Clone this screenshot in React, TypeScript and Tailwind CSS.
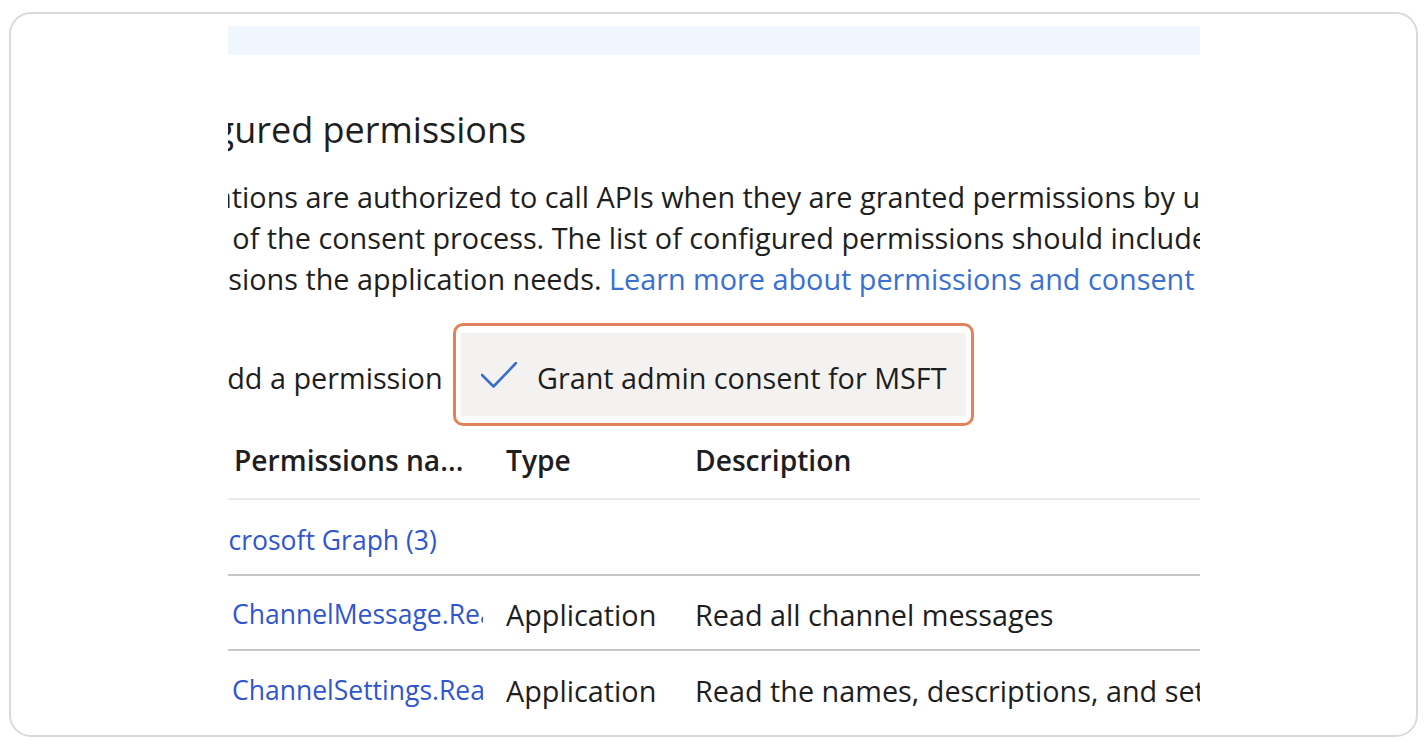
const font = "font-['Open_Sans',sans-serif]"

function Check() {
  return (
    <svg width="36" height="26" viewBox="0 0 36 26" fill="none" className="shrink-0">
      <path d="M1 13 L12.5 24.5 L35 1" stroke="#3a6ec8" strokeWidth="2.6" strokeLinecap="round" strokeLinejoin="round" />
    </svg>
  )
}

const rows = [
  { name: 'ChannelMessage.Read.All', type: 'Application', desc: 'Read all channel messages', border: true },
  { name: 'ChannelSettings.Read.All', type: 'Application', desc: 'Read the names, descriptions, and settings of all channels', border: false },
]

export default function App() {
  return (
    <div className={`h-[746px] w-[1428px] bg-white pb-[9px] pl-[9px] pr-[10px] pt-[12px] ${font} text-[#1e1e1e]`}>
      <div className="h-full overflow-hidden rounded-[22px] border-2 border-[#dadada] bg-white pl-[217px]">
        <div className="w-[972px] overflow-hidden">
          <div className="mt-[12px] h-[29px] bg-[#f0f6fe]" />

          <h2 className="mt-[55px] h-[40px] whitespace-nowrap text-[36px] leading-[40px] font-normal">
            <span className="-ml-[101px] inline-block">Configured permissions</span>
          </h2>

          <div className="mt-[26px] text-[28.8px] leading-[41px] whitespace-nowrap">
            <div className="-ml-[94px]">Applications are authorized to call APIs when they are granted permissions by users/admins as part</div>
            <div className="-ml-[96px]">as part of the consent process. The list of configured permissions should include all the permissions</div>
            <div className="-ml-[93px]">
              permissions the application needs.{' '}
              <span className="text-[#3a70d2]">Learn more about permissions and consent</span>
            </div>
          </div>

          <div className="mt-[24px] flex h-[103px] items-center text-[28.8px]">
            <div className="w-[225px] shrink-0 overflow-hidden whitespace-nowrap pt-[6px]">
              <span className="-ml-[19px] inline-block">Add a permission</span>
            </div>
            <div className="shrink-0 rounded-[10px] border-[3px] border-[#e0835a] px-[5px] py-[7px]">
              <button type="button" className="flex h-[83px] w-[505px] items-center gap-[20px] bg-[#f3f2f1] pl-[20px] whitespace-nowrap">
                <Check />
                <span className="pt-[6px]">Grant admin consent for MSFT</span>
              </button>
            </div>
          </div>

          <div className="flex h-[74px] items-center border-b-2 border-[#edebe9] pb-[4px] text-[28.2px] font-semibold whitespace-nowrap">
            <div className="w-[278px] shrink-0 pl-[6px]">Permissions na...</div>
            <div className="w-[189px] shrink-0">Type</div>
            <div className="shrink-0">Description</div>
          </div>

          <div className="flex h-[76px] items-center border-b-2 border-[#c8c6c4] pt-[8px] text-[26.5px] whitespace-nowrap text-[#2f56cf]">
            <span className="-ml-[30px] inline-block">Microsoft Graph (3)</span>
          </div>

          {rows.map((r) => (
            <div
              key={r.name}
              className={`flex h-[75px] items-center pt-[5px] text-[28.8px] whitespace-nowrap ${r.border ? 'border-b-2 border-[#c8c6c4]' : ''}`}
            >
              <div className="w-[278px] shrink-0 pl-[4px]">
                <div className="w-[251px] overflow-hidden text-[26.5px] text-[#2f56cf]">{r.name}</div>
              </div>
              <div className="w-[189px] shrink-0">{r.type}</div>
              <div className="shrink-0">{r.desc}</div>
            </div>
          ))}
        </div>
      </div>
    </div>
  )
}
